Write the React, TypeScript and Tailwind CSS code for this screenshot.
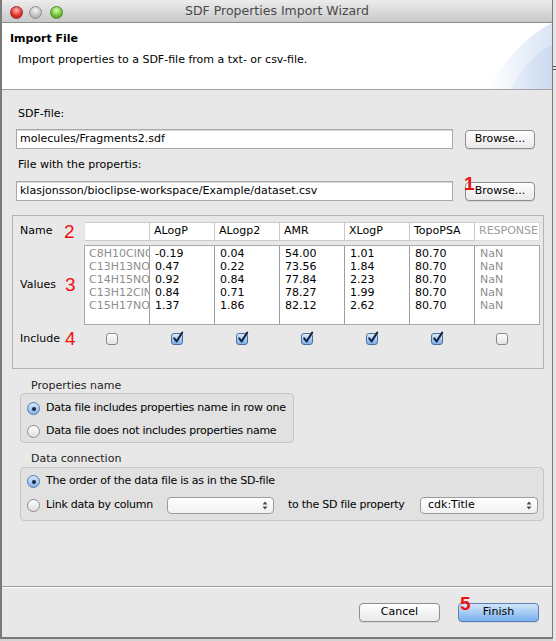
import React from 'react';

type Col = { name: string; values: string[]; dim?: boolean; include: boolean };

const columns: Col[] = [
  { name: '', values: ['C8H10ClNO3', 'C13H13NO2', 'C14H15NO2', 'C13H12ClNO', 'C15H17NO2'], dim: true, include: false },
  { name: 'ALogP', values: ['-0.19', '0.47', '0.92', '0.84', '1.37'], include: true },
  { name: 'ALogp2', values: ['0.04', '0.22', '0.84', '0.71', '1.86'], include: true },
  { name: 'AMR', values: ['54.00', '73.56', '77.84', '78.27', '82.12'], include: true },
  { name: 'XLogP', values: ['1.01', '1.84', '2.23', '1.99', '2.62'], include: true },
  { name: 'TopoPSA', values: ['80.70', '80.70', '80.70', '80.70', '80.70'], include: true },
  { name: 'RESPONSE', values: ['NaN', 'NaN', 'NaN', 'NaN', 'NaN'], dim: true, include: false },
];

function Checkbox({ checked }: { checked: boolean }) {
  if (!checked) {
    return <span className="block w-[12px] h-[12px] rounded-[3px] border border-[#8a8a8a] bg-gradient-to-b from-white to-[#e4e4e4]" />;
  }
  return (
    <span className="relative block w-[12px] h-[12px] rounded-[3px] border border-[#4d6e9c] bg-gradient-to-b from-[#d9eafc] to-[#7eb0ea]">
      <svg className="absolute left-[0px] top-[-3px]" width="12" height="13" viewBox="0 0 12 13">
        <path d="M2.2 7.4 L4.6 10.4 L10.2 1.6" fill="none" stroke="#15233c" strokeWidth="2" strokeLinecap="round" strokeLinejoin="round" />
      </svg>
    </span>
  );
}

function Radio({ on }: { on: boolean }) {
  if (on) {
    return (
      <span className="shrink-0 flex items-center justify-center w-[13px] h-[13px] rounded-full border border-[#5878a8] bg-gradient-to-b from-[#d7e8fb] to-[#80b3ec]">
        <span className="w-[4px] h-[4px] rounded-full bg-[#1a2740]" />
      </span>
    );
  }
  return <span className="shrink-0 block w-[13px] h-[13px] rounded-full border border-[#8c8c8c] bg-gradient-to-b from-white to-[#dedede]" />;
}

function Select({ value, className }: { value?: string; className: string }) {
  return (
    <div className={`shrink-0 flex items-center h-[17px] rounded-[4px] border border-[#9b9b9b] bg-gradient-to-b from-white to-[#f1f1f1] pl-[7px] pr-[5px] ${className}`}>
      <span className="flex-1">{value}</span>
      <svg width="6" height="9" viewBox="0 0 6 9">
        <path d="M3 0.5 L5.5 3.6 H0.5 Z M3 8.5 L5.5 5.4 H0.5 Z" fill="#4a4a4a" />
      </svg>
    </div>
  );
}

function Button({ children, primary, className }: { children: React.ReactNode; primary?: boolean; className: string }) {
  const look = primary
    ? 'border-[#5a7fb6] bg-gradient-to-b from-[#d3e6fb] via-[#a5cbf4] to-[#78b0ee]'
    : 'border-[#8e8e8e] bg-gradient-to-b from-white to-[#e9e9e9]';
  return (
    <div className={`flex items-center justify-center h-[19px] rounded-[4px] border shadow-[0_1px_0_rgba(0,0,0,0.08)] ${look} ${className}`}>
      {children}
    </div>
  );
}

function Red({ children, className = '' }: { children: React.ReactNode; className?: string }) {
  return <span className={`font-['Liberation_Sans',Arial,sans-serif] text-[19px] leading-[16px] text-[#f01010] ${className}`}>{children}</span>;
}

export default function App() {
  return (
    <div className="w-[556px] h-[641px] flex bg-[#d4d4d4] font-['DejaVu_Sans',sans-serif] text-[11px] text-black overflow-hidden">
      <div className="w-[553px] h-[639px] flex flex-col border-l-2 border-r border-b-2 border-[#7a7a7a] bg-[#e8e8e8]">
        {/* title bar */}
        <div className="relative h-[23px] flex items-center border-b border-[#8d8d8d] bg-gradient-to-b from-[#ececec] to-[#c9c9c9]">
          <div className="flex items-center gap-[6px] ml-[8px] mt-[2px]">
            <span className="w-[13px] h-[13px] rounded-full border border-[#9b2a2a] bg-[radial-gradient(circle_at_50%_30%,#ffb3b3,#e2372f_55%,#a81410)]" />
            <span className="w-[13px] h-[13px] rounded-full border border-[#8f8f8f] bg-[radial-gradient(circle_at_50%_30%,#f4f4f4,#c4c4c4_55%,#9d9d9d)]" />
            <span className="ml-[2px] w-[13px] h-[13px] rounded-full border border-[#4d8a2a] bg-[radial-gradient(circle_at_50%_30%,#d9ffb0,#74c43b_55%,#3f8c19)]" />
          </div>
          <div className="absolute inset-0 flex items-center justify-center text-[12.5px] text-[#4a4a4a] pt-[1px]">
            SDF Properties Import Wizard
          </div>
        </div>

        {/* header */}
        <div className="relative h-[67px] bg-white border-b border-[#a3a3a3] overflow-hidden">
          <div className="pl-[8px] pt-[9px] font-bold leading-[14px]">Import File</div>
          <div className="pl-[16px] mt-[7px] leading-[14px]">Import properties to a SDF-file from a txt- or csv-file.</div>
          <svg className="absolute right-0 top-0" width="74" height="66" viewBox="0 0 74 66">
            <defs>
              <linearGradient id="hg" x1="0" y1="0" x2="1" y2="0">
                <stop offset="0" stopColor="#ffffff" />
                <stop offset="1" stopColor="#d9e4f5" />
              </linearGradient>
              <linearGradient id="hg2" x1="0" y1="0" x2="1" y2="0">
                <stop offset="0" stopColor="#e8eff9" />
                <stop offset="1" stopColor="#cbd9ef" />
              </linearGradient>
            </defs>
            <path d="M8 66 C 26 40, 46 14, 74 0 L74 66 Z" fill="url(#hg)" />
            <path d="M32 66 C 44 46, 56 30, 74 22 L74 66 Z" fill="url(#hg2)" />
          </svg>
        </div>

        {/* body */}
        <div className="flex-1 flex flex-col">
          <div className="ml-[16px] mt-[17px] leading-[14px]">SDF-file:</div>
          <div className="flex items-center mt-[8px] h-[20px]">
            <div className="ml-[14px] w-[437px] h-[20px] flex items-center bg-white border border-[#a8a8a8] pl-[3px] shadow-[inset_0_1px_0_#d8d8d8]">
              molecules/Fragments2.sdf
            </div>
            <Button className="ml-[12px] w-[70px]">Browse...</Button>
          </div>

          <div className="ml-[16px] mt-[9px] leading-[14px]">File with the propertis:</div>
          <div className="flex items-center mt-[9px] h-[20px]">
            <div className="ml-[14px] w-[437px] h-[20px] flex items-center bg-white border border-[#a8a8a8] pl-[3px] shadow-[inset_0_1px_0_#d8d8d8]">
              klasjonsson/bioclipse-workspace/Example/dataset.csv
            </div>
            <div className="relative ml-[12px]">
              <Button className="w-[70px]">Browse...</Button>
              <Red className="absolute left-[-1px] top-[-6px] font-bold">1</Red>
            </div>
          </div>

          {/* properties table */}
          <div className="ml-[10px] mt-[14px] w-[532px] h-[154px] border border-[#b4b4b4] pt-[6px]">
            <div className="flex h-[19px] items-center">
              <div className="shrink-0 w-[71px] pl-[7px] flex items-center">
                <span className="w-[44px]">Name</span>
                <Red>2</Red>
              </div>
              <div className="flex h-[19px] border-l border-[#e2e2e2]">
                {columns.map((c, i) => (
                  <div
                    key={i}
                    className={`shrink-0 w-[65px] h-[19px] flex items-center pl-[4px] bg-white border-y border-r ${i === 6 ? 'border-[#dcdcdc] text-[#9c9c9c]' : 'border-[#c9c9c9]'}`}
                  >
                    {c.name}
                  </div>
                ))}
              </div>
            </div>

            <div className="flex mt-[4px] h-[80px]">
              <div className="shrink-0 w-[71px] pl-[7px] flex items-center">
                <span className="w-[45px]">Values</span>
                <Red>3</Red>
              </div>
              <div className="flex h-[80px] border border-[#a9a9a9] bg-white">
                {columns.map((c, i) => (
                  <div
                    key={i}
                    className={`shrink-0 overflow-hidden whitespace-nowrap pt-[1px] leading-[13px] ${i > 0 ? 'w-[65px] border-l border-[#9c9c9c] pl-[5px]' : 'w-[64px] pl-[4px]'} ${c.dim ? 'text-[#8e8e8e]' : ''}`}
                  >
                    {c.values.map((v, j) => (
                      <div key={j} className="overflow-hidden">{v}</div>
                    ))}
                  </div>
                ))}
              </div>
            </div>

            <div className="flex items-center mt-[8px] h-[12px]">
              <div className="shrink-0 w-[71px] pl-[7px] flex items-center">
                <span className="w-[45px]">Include</span>
                <Red>4</Red>
              </div>
              <div className="flex">
                {columns.map((c, i) => (
                  <div key={i} className="shrink-0 w-[65px] flex justify-center pr-[9px]">
                    <Checkbox checked={c.include} />
                  </div>
                ))}
              </div>
            </div>
          </div>

          {/* properties name */}
          <div className="ml-[29px] mt-[10px] leading-[14px] text-[#222]">Properties name</div>
          <div className="ml-[18px] w-[274px] h-[50px] rounded-[4px] border border-[#c6c6c6] bg-[#e1e1e1] flex flex-col pl-[6px] pt-[8px] gap-[10px] whitespace-nowrap tracking-[-0.25px]">
            <div className="flex items-center gap-[6px] h-[13px]">
              <Radio on />
              <span>Data file includes properties name in row one</span>
            </div>
            <div className="flex items-center gap-[6px] h-[13px]">
              <Radio on={false} />
              <span>Data file does not includes properties name</span>
            </div>
          </div>

          {/* data connection */}
          <div className="ml-[29px] mt-[9px] leading-[14px] text-[#222]">Data connection</div>
          <div className="ml-[18px] mt-[1px] w-[524px] h-[54px] rounded-[4px] border border-[#c6c6c6] bg-[#e1e1e1] flex flex-col pl-[6px] pt-[7px] gap-[9px] whitespace-nowrap">
            <div className="flex items-center gap-[6px] h-[13px] tracking-[-0.25px]">
              <Radio on />
              <span>The order of the data file is as in the SD-file</span>
            </div>
            <div className="flex items-center h-[17px]">
              <Radio on={false} />
              <span className="ml-[6px] w-[121px] tracking-[-0.25px]">Link data by column</span>
              <Select className="w-[107px]" />
              <span className="ml-[14px] w-[132px] tracking-[-0.25px]">to the SD file property</span>
              <Select className="w-[118px]" value="cdk:Title" />
            </div>
          </div>

          <div className="flex-1" />

          <div className="border-t border-[#9a9a9a] shadow-[0_1px_0_#ffffff]" />
          <div className="h-[50px] flex justify-end items-start pt-[16px] pr-[13px]">
            <Button className="w-[81px]">Cancel</Button>
            <div className="relative ml-[18px]">
              <Button primary className="w-[81px]">Finish</Button>
              <Red className="absolute left-[2px] top-[-7px] font-bold">5</Red>
            </div>
          </div>
        </div>
      </div>
      <div className="flex-1 flex flex-col bg-[#e6e6e6]">
        <div className="h-[66px]" />
        <div className="h-[1px] bg-[#555]" />
        <div className="h-[2px]" />
        <div className="h-[1px] bg-[#555]" />
      </div>
    </div>
  );
}
